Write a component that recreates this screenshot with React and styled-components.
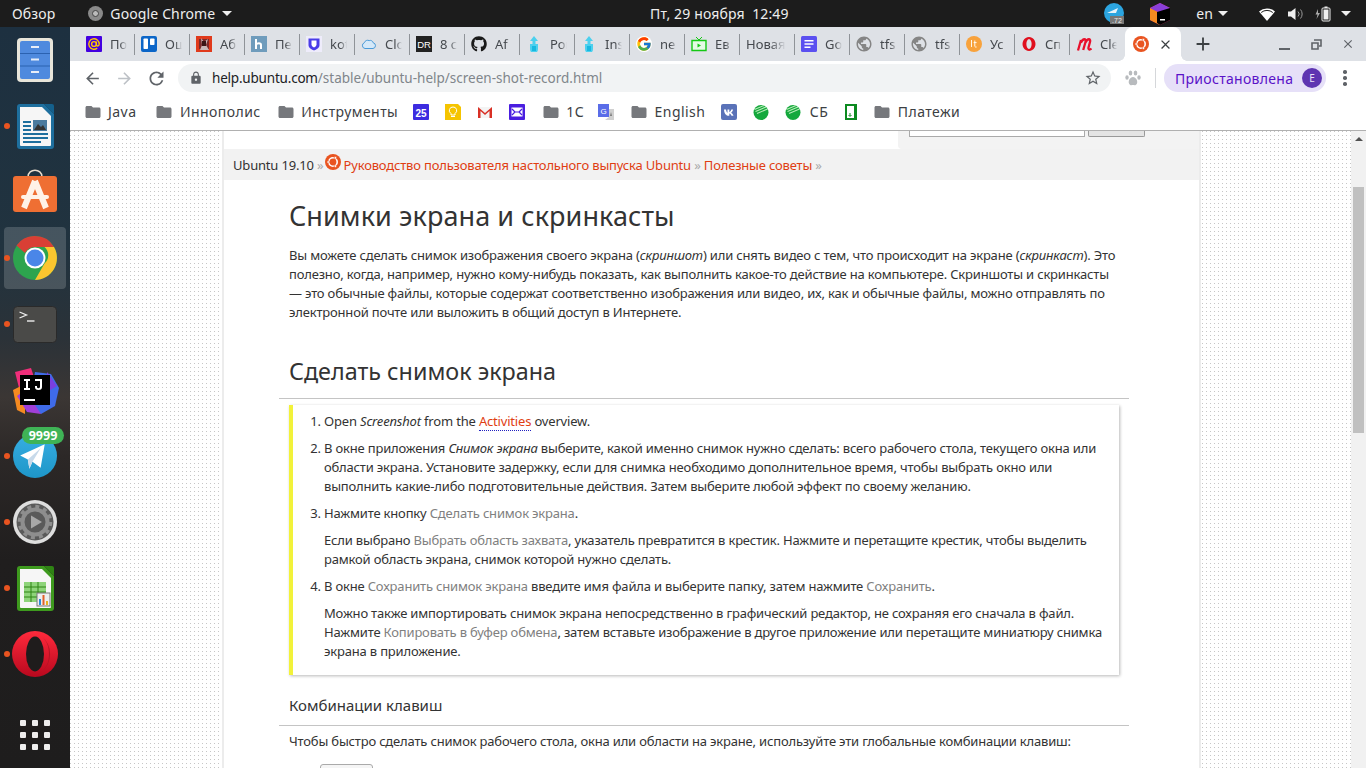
import styled, { createGlobalStyle } from 'styled-components';
import { FaGithub } from 'react-icons/fa';
import { FcGoogle } from 'react-icons/fc';
import { MdPublic, MdArrowBack, MdArrowForward, MdRefresh, MdLock, MdStarBorder, MdClose, MdAdd, MdFolder } from 'react-icons/md';

const uiFont = `"Noto Sans", "Open Sans", sans-serif`;

const GlobalStyle = createGlobalStyle`
    html, body { margin: 0; padding: 0; height: 100%; overflow: hidden; }
    body { font-family: ${uiFont}; background: #1d1d1d; }
    #root { height: 100%; }
`;

const Screen = styled.div`
    width: 1366px;
    height: 768px;
    display: flex;
    flex-direction: column;
    overflow: hidden;
`;

/* верхняя панель */
const TopBar = styled.header`
    height: 27px;
    flex: none;
    display: flex;
    align-items: center;
    background: #1c1c1c;
    color: #eee;
    font-size: 14px;
    letter-spacing: 0.13px;
`;

const TopLeft = styled.div`
    width: 650px;
    flex: none;
    display: flex;
    align-items: center;
    padding-left: 12px;
    box-sizing: border-box;
`;

const AppName = styled.div`
    margin-left: 33px;
    display: flex;
    align-items: center;
    gap: 7px;
`;

const Caret = styled.span`
    display: inline-block;
    width: 0;
    height: 0;
    border-left: 5px solid transparent;
    border-right: 5px solid transparent;
    border-top: 5px solid #eee;
    margin-left: ${(p) => p.$gap || 0}px;
`;

const Clock = styled.div`
    white-space: pre;
`;

const Tray = styled.div`
    margin-left: auto;
    display: flex;
    align-items: center;
    padding-right: 15px;
`;

const TrayItem = styled.div`
    display: flex;
    align-items: center;
    margin-left: ${(p) => p.$left}px;
`;

const Body = styled.div`
    flex: 1;
    min-height: 0;
    display: flex;
`;

/* док */
const Dock = styled.aside`
    width: 70px;
    flex: none;
    display: flex;
    flex-direction: column;
    background: linear-gradient(#1d3040 0, #21333f 30%, #2b3238 42%, #3b3634 50%, #2c2827 58%, #201e1e 72%, #1e1d1d 100%);
`;

const DockItem = styled.div`
    position: relative;
    height: 66px;
    flex: none;
    display: flex;
    align-items: center;
    justify-content: center;

    &::before {
        content: '';
        display: ${(p) => (p.$running ? 'block' : 'none')};
        position: absolute;
        left: 4px;
        top: 30px;
        width: 6px;
        height: 6px;
        border-radius: 50%;
        background: #e95420;
    }
`;

const DockActive = styled.div`
    width: 62px;
    height: 62px;
    border-radius: 4px;
    background: rgba(255, 255, 255, 0.17);
    display: flex;
    align-items: center;
    justify-content: center;
`;

const DockApps = styled(DockItem)`
    margin-top: auto;
`;

const AppsGrid = styled.div`
    display: grid;
    grid-template-columns: repeat(3, 6px);
    gap: 6px;

    span {
        height: 6px;
        border-radius: 1px;
        background: #eee;
    }
`;

const Badge = styled.div`
    position: absolute;
    left: 22px;
    top: 4px;
    width: 42px;
    height: 17px;
    border-radius: 9px;
    background: #3fb356;
    color: #fff;
    font-size: 12.5px;
    font-weight: 700;
    line-height: 17px;
    text-align: center;
`;

/* браузер */
const Browser = styled.main`
    flex: 1;
    min-width: 0;
    display: flex;
    flex-direction: column;
    background: #fff;
`;

const TabStrip = styled.div`
    height: 34px;
    flex: none;
    display: flex;
    align-items: stretch;
    padding-left: 10px;
    background: #dee1e6;
`;

const Tab = styled.div`
    position: relative;
    width: 55px;
    flex: none;
    box-sizing: border-box;
    display: flex;
    align-items: center;
    gap: 8px;
    padding-left: 6px;
    font-size: 13px;
    color: #45494e;

    &::after {
        content: '';
        position: absolute;
        right: 0;
        top: 7px;
        height: 21px;
        width: 1px;
        background: #8f9398;
        display: ${(p) => (p.$last ? 'none' : 'block')};
    }
`;

const TabLabel = styled.span`
    width: ${(p) => p.$width || 17}px;
    overflow: hidden;
    white-space: nowrap;
    -webkit-mask-image: linear-gradient(to right, #000 60%, transparent);
    mask-image: linear-gradient(to right, #000 60%, transparent);
`;

const ActiveTab = styled.div`
    position: relative;
    width: 56px;
    flex: none;
    box-sizing: border-box;
    display: flex;
    align-items: center;
    justify-content: space-between;
    padding: 0 8px;
    background: #fff;
    border-radius: 8px 8px 0 0;
    color: #45494e;

    &::before,
    &::after {
        content: '';
        position: absolute;
        bottom: 0;
        width: 6px;
        height: 6px;
    }

    &::before {
        left: -6px;
        background: radial-gradient(circle at 0 0, #dee1e6 5.5px, #fff 6px);
    }

    &::after {
        right: -6px;
        background: radial-gradient(circle at 100% 0, #dee1e6 5.5px, #fff 6px);
    }
`;

const NewTab = styled.div`
    margin-left: 11px;
    display: flex;
    align-items: center;
    color: #3c4043;
`;

const WindowButtons = styled.div`
    margin-left: auto;
    display: flex;
    align-items: center;
    gap: 18px;
    padding-right: 11px;
    color: #5f6368;
`;

const WinBtn = styled.div`
    width: 14px;
    height: 14px;
    display: flex;
    align-items: center;
    justify-content: center;
`;

const Toolbar = styled.div`
    height: 34px;
    flex: none;
    display: flex;
    align-items: center;
    padding-left: 6px;
    color: #5f6368;
`;

const NavBtn = styled.div`
    width: 32px;
    display: flex;
    justify-content: center;
    color: ${(p) => (p.$off ? '#bdc1c6' : '#5f6368')};
`;

const Omnibox = styled.div`
    width: 933px;
    height: 28px;
    margin-left: 6px;
    display: flex;
    align-items: center;
    padding: 0 9px 0 11px;
    box-sizing: border-box;
    border-radius: 14px;
    background: #f1f3f4;
    font-size: 13.5px;
`;

const Url = styled.div`
    margin-left: 9px;
    color: #80868b;
    white-space: nowrap;

    b {
        font-weight: 400;
        color: #202124;
        letter-spacing: -0.2px;
    }
`;

const Star = styled.div`
    margin-left: auto;
    display: flex;
`;

const ExtIcon = styled.div`
    margin-left: 14px;
    display: flex;
`;

const ToolbarDivider = styled.div`
    width: 1px;
    height: 20px;
    margin-left: 14px;
    background: #d5d7da;
`;

const ProfilePill = styled.div`
    width: 162px;
    height: 28px;
    margin-left: 8px;
    display: flex;
    align-items: center;
    justify-content: space-between;
    padding: 0 4px 0 11px;
    box-sizing: border-box;
    border-radius: 14px;
    background: #e6e0f8;
    color: #5a12c8;
    font-size: 14px;
    letter-spacing: 0.3px;
`;

const Avatar = styled.div`
    width: 20px;
    height: 20px;
    border-radius: 50%;
    background: #5e35b1;
    color: #e8e0f8;
    font-size: 10px;
    line-height: 20px;
    text-align: center;
    letter-spacing: 0;
`;

const MenuDots = styled.div`
    margin-left: 17px;
    display: flex;
    flex-direction: column;
    gap: 2.5px;

    span {
        width: 3.5px;
        height: 3.5px;
        border-radius: 50%;
        background: #5f6368;
    }
`;

const BookmarkBar = styled.div`
    height: 33px;
    padding: 0 0 2px 13.5px;
    flex: none;
    display: flex;
    align-items: center;
    border-bottom: 1px solid #b0b0b0;
    font-size: 14px;
    color: #3c4043;
    letter-spacing: 0.45px;
`;

const Bookmark = styled.div`
    display: flex;
    align-items: center;
    gap: ${(p) => p.$gap || 6.5}px;
    margin-right: ${(p) => p.$right}px;
    white-space: nowrap;
`;

/* страница */
const Viewport = styled.div`
    flex: 1;
    min-height: 0;
    display: flex;
`;

const Dotted = styled.div`
    flex: 1;
    min-width: 0;
    overflow: hidden;
    background: conic-gradient(from 270deg at 1px 1px, #c6c6c6 90deg, #fff 0) 0 0 / 4px 4px;
`;

const Page = styled.article`
    width: 975px;
    margin-left: 154px;
    background: #fff;
    box-shadow: -2px 0 0 #ececec, 2px 0 0 #ececec;
    color: #333;
    font-size: 13px;
    line-height: 19px;
    letter-spacing: -0.18px;
`;

const SearchStrip = styled.div`
    height: 18px;
    display: flex;
    justify-content: flex-end;
`;

const SearchPanel = styled.div`
    width: 301px;
    box-sizing: border-box;
    display: flex;
    gap: 3px;
    padding-left: 11px;
    background: #f3f3f3;
    border-radius: 0 0 0 4px;
`;

const SearchInput = styled.div`
    width: 174px;
    height: 5px;
    background: #fff;
    border: 1px solid #aaa;
    border-top: 0;
`;

const SearchButton = styled.div`
    width: 55px;
    height: 5px;
    background: #e4e4e4;
    border: 1px solid #999;
    border-top: 0;
    border-radius: 0 0 2px 2px;
`;

const Crumbs = styled.nav`
    height: 30px;
    padding: 1px 0 0 9px;
    display: flex;
    align-items: center;
    background: #f2f2f2;
    white-space: pre;
    color: #333;

    i {
        font-style: normal;
        color: #aaa;
    }

    a {
        color: #e03e12;
    }
`;

const CrumbLogo = styled.span`
    display: flex;
    margin: -6px 3px 0 -2px;
`;

const Content = styled.div`
    padding: 0 70px 0 55px;
`;

const Title = styled.h1`
    margin: 17px 0 0 10px;
    font-size: 27px;
    line-height: 38px;
    font-weight: 400;
    letter-spacing: 0.08px;
    color: #333;
    white-space: nowrap;
`;

const Para = styled.p`
    margin: ${(p) => p.$top}px 0 0 10px;
    white-space: nowrap;
`;

const Section = styled.h2`
    margin: 30px -70px 0 0;
    padding: 0 0 8px 10px;
    font-size: 23.35px;
    line-height: 38px;
    font-weight: 400;
    letter-spacing: 0;
    border-bottom: 1px solid #c4c4c4;
    width: 840px;
`;

const Steps = styled.div`
    margin: 6px 0 0 10px;
    width: 826px;
    height: 270px;
    border-left: 4px solid #f2f23a;
    box-shadow: 1px 1px 3px rgba(0, 0, 0, 0.28);
    overflow: hidden;
`;

const StepList = styled.ol`
    margin: 7px 0 0;
    padding: 0 0 0 31px;
    white-space: nowrap;

    p {
        margin: 8px 0 0;
    }
`;

const Step = styled.li`
    margin-top: ${(p) => (p.$first ? 0 : 8)}px;
`;

const GuiLabel = styled.span`
    color: #808080;
`;

const TermLink = styled.a`
    color: #e03e12;
    border-bottom: 1px dotted #2020c0;
`;

const SubSection = styled.h3`
    margin: 19px 0 0;
    padding: 0 0 9px 10px;
    font-size: 15px;
    line-height: 22px;
    font-weight: 400;
    letter-spacing: 0;
    width: 840px;
    border-bottom: 1px solid #c4c4c4;
`;

const KeyRow = styled.div`
    margin: 13px 0 0 41px;
    display: flex;
`;

const Key = styled.div`
    width: 51px;
    height: 20px;
    border: 1px solid #aaa;
    border-radius: 3px;
    background: #f5f5f5;
`;

const ScrollTrack = styled.div`
    width: 15px;
    flex: none;
    display: flex;
    flex-direction: column;
    align-items: center;
    background: #f1f1f1;
`;

const ScrollArrow = styled.div`
    margin-top: 6px;
    width: 0;
    height: 0;
    border-left: 4px solid transparent;
    border-right: 4px solid transparent;
    border-bottom: 4px solid #505050;
`;

const ScrollThumb = styled.div`
    margin-top: 46px;
    width: 11px;
    height: 246px;
    background: #c0c0c0;
`;

/* иконки */
const Ubuntu = ({ size = 16 }) => (
    <svg width={size} height={size} viewBox="0 0 16 16">
        <circle cx="8" cy="8" r="8" fill="#e95420" />
        <circle cx="8" cy="8" r="4.2" fill="none" stroke="#fff" strokeWidth="1.6" />
        <circle cx="3.2" cy="8" r="1.3" fill="#fff" stroke="#e95420" strokeWidth=".6" />
        <circle cx="10.4" cy="3.9" r="1.3" fill="#fff" stroke="#e95420" strokeWidth=".6" />
        <circle cx="10.4" cy="12.1" r="1.3" fill="#fff" stroke="#e95420" strokeWidth=".6" />
    </svg>
);

const Fav = ({ children, w = 16 }) => (
    <svg width={w} height="16" viewBox={`0 0 ${w} 16`} style={{ flex: 'none' }}>{children}</svg>
);

const favicons = {
    mail: <Fav><rect width="16" height="16" rx="1" fill="#4300e0" /><circle cx="8" cy="8" r="2.4" fill="none" stroke="#ffc800" strokeWidth="1.4" /><path d="M10.4 5.6v3.2c0 1.8 2.8 1.6 2.8-.8a5.2 5.2 0 1 0-2 4.1" fill="none" stroke="#ffc800" strokeWidth="1.4" /></Fav>,
    trello: <Fav><rect width="16" height="16" rx="2" fill="#0c66c8" /><rect x="2.5" y="2.5" width="4.5" height="10.5" rx=".8" fill="#fff" /><rect x="9" y="2.5" width="4.5" height="6.5" rx=".8" fill="#fff" /></Fav>,
    photo: <Fav><rect width="16" height="16" fill="#e03a1c" /><path d="M3 3h10v10H3z" fill="#7d2a2a" /><path d="M5 2l3 4 4-3-2 6 3 5H4l2-5z" fill="#c9b8b8" /><path d="M6 5h4v5H6z" fill="#3a1515" /></Fav>,
    hexlet: <Fav><rect width="16" height="16" fill="#6f9cbc" /><path d="M5 3v10M5 8.5c1-1.5 5-2 5 .5V13" fill="none" stroke="#fff" strokeWidth="2" /></Fav>,
    shield: <Fav><rect width="16" height="16" fill="#eeecfb" /><path d="M2.5 2.5h11v6.5c0 3-3 4.5-5.500 5.500C5.500 13.500 2.500 12 2.500 9z" fill="#4a3ce8" /><path d="M5.500 4.500h5v4c0 1.500-1.500 2.500-2.500 3-1-.5-2.500-1.500-2.500-3z" fill="#fff" /></Fav>,
    cloud: <Fav><path d="M4 12.5a3 3 0 0 1-.6-5.800 3.400 3.400 0 0 1 4.800-2.100 3 3 0 0 1 4 2.200 2.900 2.900 0 0 1-.2 5.700z" fill="#d4e8f8" stroke="#4a9ad8" /></Fav>,
    dr: <Fav><rect width="16" height="16" fill="#222" /><text x="8" y="12" textAnchor="middle" fontSize="9.5" fontFamily="Liberation Sans" fill="#fff">DR</text></Fav>,
    github: <FaGithub size={16} color="#1a1a1a" style={{ flex: 'none' }} />,
    tower: <Fav><path d="M8 0l4 5H9.500v3H12v5a3 3 0 0 1-8 0V8h2.500V5H4z" fill="#4cd0ee" /><path d="M6 10h4v5H6z" fill="#18b8e0" /></Fav>,
    tv: <Fav><path d="M1 4.500h14v10H1z" fill="#e4fbe4" stroke="#14c814" strokeWidth="1.400" /><path d="M5 1l3 3 3-3" fill="none" stroke="#14c814" /><path d="M6.500 7.500v4l3.500-2z" fill="#14c814" /></Fav>,
    docs: <Fav><rect width="16" height="16" rx="1.500" fill="#5b50f0" /><path d="M3.500 4h9v1.600h-9zM3.500 7.200h9v1.600h-9zM3.500 10.400h6v1.600h-6z" fill="#fff" /></Fav>,
    globe: <MdPublic size={18} color="#858585" style={{ flex: 'none', margin: '-1px' }} />,
    lt: <Fav><circle cx="8" cy="8" r="8" fill="#f8a23c" /><path d="M5.500 4v7M8.800 4.500v5.500c0 1 .7 1.200 1.800 1M7.600 6.600h3" fill="none" stroke="#fff" strokeWidth=".9" /></Fav>,
    opera: <Fav><path fillRule="evenodd" d="M8 1a6.500 7 0 1 0 .01 0zM8 3a2.600 5 0 1 1-.01 0z" fill="#e0101e" /></Fav>,
    mem: <Fav><path d="M2 14.500L5 4M5 6.500C7 2 10.500 2.500 9.500 6L7.200 14M9.500 6.500C11.500 2 15 2.500 14 6L12.500 11.500C12 14 14 14 15.500 12.500" fill="none" stroke="#e8102c" strokeWidth="2.300" /></Fav>
};

const tabs = [
    ['mail', 'Почта'], ['trello', 'Ошибки'], ['photo', 'Абв'], ['hexlet', 'Первый'], ['shield', 'kotlin'],
    ['cloud', 'Cloud'], ['dr', '8 сент'], ['github', 'Af'], ['tower', 'Ром'], ['tower', 'Ins'],
    ['google', 'ne'], ['tv', 'Ев'], [null, 'Новая'], ['docs', 'Go'], ['globe', 'tfs'],
    ['globe', 'tfs'], ['lt', 'Ус'], ['opera', 'Сп'], ['mem', 'Cle']
];

const Folder = () => <MdFolder size={18} color="#76787c" style={{ flex: 'none' }} />;

const BmGap = styled.div`
    width: ${(p) => p.$w}px;
    flex: none;
`;

const SberIcon = () => (
    <Fav>
        <circle cx="8" cy="8.500" r="7.500" fill="#14a83c" />
        <path d="M1.500 5.500L11 1.500M2.500 7.500L13 3M4 9.500L14.500 5" stroke="#b8ecb8" strokeWidth="1.100" />
    </Fav>
);

const FilesIcon = () => (
    <svg width="36" height="44" viewBox="0 0 36 44">
        <rect width="36" height="44" rx="4" fill="#e8e5da" />
        <rect x="3" y="3" width="30" height="38" rx="2" fill="#4f8ade" />
        <path d="M3 15.500h30M3 28h30" stroke="#2b62b0" strokeWidth="1" />
        <path d="M14 9h8M14 21.500h8M14 34h8" stroke="#e8eef8" strokeWidth="2" />
    </svg>
);

const DocIcon = ({ frame, fold, children }) => (
    <svg width="37" height="45" viewBox="0 0 37 45">
        <path d="M3 0h24l10 10v32a3 3 0 0 1-3 3H3a3 3 0 0 1-3-3V3a3 3 0 0 1 3-3z" fill={frame} />
        <path d="M3 3h22l9 9v29a1 1 0 0 1-1 1H4a1 1 0 0 1-1-1z" fill="#f6f6f6" />
        <path d="M27 0h8a2 2 0 0 1 2 2v8z" fill={fold} />
        {children}
    </svg>
);

const StoreIcon = () => (
    <svg width="44" height="43" viewBox="0 0 44 43" style={{ marginTop: -3 }}>
        <path d="M15 8c0-9 14-9 14 0" fill="none" stroke="#eadccc" strokeWidth="1.500" />
        <path d="M3 7h38a3 3 0 0 1 3 3v30a3 3 0 0 1-3 3H3a3 3 0 0 1-3-3V10a3 3 0 0 1 3-3z" fill="#ef6f33" />
        <path d="M22 12L11 39M22 12l11 27" stroke="#fff3e8" strokeWidth="6" fill="none" />
        <rect x="8" y="26" width="28" height="4" rx="2" fill="#fff3e8" />
    </svg>
);

const ChromeIcon = () => (
    <svg width="44" height="44" viewBox="0 0 44 44">
        <circle cx="22" cy="22" r="22" fill="#2da44e" />
        <path d="M22 0a22 22 0 0 1 19 11H22a11 11 0 0 0-10 6L3.500 9.500A22 22 0 0 1 22 0z" fill="#d93f35" />
        <path d="M41 11a22 22 0 0 1-19 33l9.500-16.500a11 11 0 0 0 0-16.500z" fill="#fbc62f" />
        <circle cx="22" cy="22" r="10.500" fill="#fff" />
        <circle cx="22" cy="22" r="8.500" fill="#4a86e8" />
    </svg>
);

const TerminalIcon = () => (
    <svg width="44" height="37" viewBox="0 0 44 37">
        <rect x=".5" y=".5" width="43" height="36" rx="4" fill="#4a4a48" stroke="#2a2a2a" />
        <path d="M6.500 6l7 3-7 3" fill="none" stroke="#eee" strokeWidth="1.300" />
        <path d="M14 15h7.500" stroke="#eee" strokeWidth="1.400" />
    </svg>
);

const IdeaIcon = () => (
    <svg width="48" height="48" viewBox="0 0 48 48">
        <path d="M4 6l16-4 4 12L8 22z" fill="#f02e7a" />
        <path d="M24 6l16 2 8 14-4 18-14 8-12-12z" fill="#3f6be8" />
        <path d="M36 6l10 14-10 6z" fill="#7a3fe0" />
        <path d="M2 24l12-6v30L6 44z" fill="#f58a20" />
        <path d="M6 30l10 16 14 2-16-24z" fill="#a03fd8" />
        <rect x="9" y="9" width="30" height="30" fill="#000" />
        <path d="M13 13h6v2h-2v7h2v2h-6v-2h2v-7h-2zM24 13h7v8c0 2-1 3-3.500 3S24 23 24 21v-1h2v1c0 .8.700 1.200 1.500 1.200s1.500-.4 1.500-1.200v-6h-5z" fill="#fff" />
        <rect x="13" y="33" width="11" height="2" fill="#fff" />
    </svg>
);

const TelegramIcon = () => (
    <svg width="44" height="44" viewBox="0 0 43 43">
        <defs>
            <linearGradient id="tg" x1="0" y1="0" x2="0" y2="1">
                <stop offset="0" stopColor="#37aee2" />
                <stop offset="1" stopColor="#1e96c8" />
            </linearGradient>
        </defs>
        <circle cx="21.500" cy="21.500" r="21.500" fill="url(#tg)" />
        <path d="M7 21L31 10 27 33 19 27 16 34 14.500 25z" fill="#fff" />
        <path d="M14.500 25L27 14 19 27 16 34z" fill="#c8daea" />
    </svg>
);

const SettingsIcon = () => (
    <svg width="44" height="44" viewBox="0 0 44 44">
        <circle cx="22" cy="22" r="22" fill="#dedede" />
        <circle cx="22" cy="22" r="18.500" fill="#5a5a5a" />
        <circle cx="22" cy="22" r="12.500" fill="none" stroke="#8e8e8e" strokeWidth="4" />
        <circle cx="22" cy="22" r="15.500" fill="none" stroke="#8e8e8e" strokeWidth="3.500" strokeDasharray="4 4.100" />
        <path d="M18 15.500v13l11-6.500z" fill="#a8a8a8" />
    </svg>
);

const OperaIcon = () => (
    <svg width="46" height="46" viewBox="0 0 46 46">
        <defs>
            <linearGradient id="op" x1="0" y1="0" x2="0" y2="1">
                <stop offset="0" stopColor="#ff2a3c" />
                <stop offset="1" stopColor="#b8081e" />
            </linearGradient>
        </defs>
        <circle cx="23" cy="23" r="23" fill="url(#op)" />
        <ellipse cx="23" cy="23" rx="9" ry="17.500" fill="#1f1c1c" />
        <path d="M30 5.500A23 23 0 0 1 30 40.500C35 36 37 30 37 23S35 10 30 5.500z" fill="#b01424" />
    </svg>
);

const WifiIcon = () => (
    <svg width="16" height="14" viewBox="0 0 16 14">
        <path d="M0 4.500a12 12 0 0 1 16 0L8 14z" fill="#fff" />
        <path d="M2.200 5.500a9 9 0 0 1 11.600 0" stroke="#1c1c1c" strokeWidth="1" fill="none" />
    </svg>
);

const VolumeIcon = () => (
    <svg width="16" height="14" viewBox="0 0 16 14">
        <path d="M0 4.500h3L7.500 1v12L3 9.500H0z" fill="#eee" />
        <path d="M10 4.500a3.500 3.500 0 0 1 0 5M12.500 2.500a7 7 0 0 1 0 9" stroke="#999" fill="none" />
    </svg>
);

const BatteryIcon = () => (
    <svg width="16" height="16" viewBox="0 0 16 16">
        <path d="M3 3L.5 8.500h2L1.500 13 5 7H3z" fill="#aaa" />
        <rect x="7" y="2" width="8" height="13" rx="1" fill="none" stroke="#eee" />
        <rect x="8.500" y="3.500" width="5" height="10" fill="#eee" />
        <rect x="9.500" y="0.500" width="3" height="1.500" fill="#eee" />
    </svg>
);

const TelegramTray = () => (
    <svg width="20" height="22" viewBox="0 0 20 22">
        <circle cx="10" cy="10" r="10" fill="#2ca5e0" />
        <path d="M3 10l11-5-2 5z" fill="#e8f4fa" />
        <rect x="6" y="13" width="14" height="8" fill="#777" />
        <text x="13" y="20" fontSize="7" textAnchor="middle" fontFamily="Liberation Sans" fill="#eee">.72</text>
    </svg>
);

const ToolboxTray = () => (
    <svg width="20" height="22" viewBox="0 0 20 22">
        <path d="M10 0l10 5v12l-10 5-10-5V5z" fill="#e6326e" />
        <path d="M0 5l10 5v12L0 17z" fill="#f58a20" />
        <path d="M10 0l10 5-10 5-10-5z" fill="#8a3fd8" />
        <path d="M7 9l13-4v12l-10 5-3-2z" fill="#000" />
        <rect x="10" y="16" width="5" height="1.500" fill="#fff" />
    </svg>
);

const Paw = () => (
    <svg width="16" height="16" viewBox="0 0 16 16" fill="#b8bbbe">
        <ellipse cx="2" cy="7.500" rx="1.700" ry="2.200" />
        <ellipse cx="5.500" cy="3" rx="1.800" ry="2.500" />
        <ellipse cx="10.500" cy="3" rx="1.800" ry="2.500" />
        <ellipse cx="14" cy="7.500" rx="1.700" ry="2.200" />
        <path d="M8 7c3 0 5 4 4 6.500S9 15 8 15s-3 1-4-1.500S5 7 8 7z" />
    </svg>
);

export default function App() {
    return (
        <Screen>
            <GlobalStyle />
            <TopBar>
                <TopLeft>
                    <span>Обзор</span>
                    <AppName>
                        <svg width="15" height="15" viewBox="0 0 15 15">
                            <circle cx="7.500" cy="7.500" r="7.500" fill="#8a8a8a" />
                            <circle cx="7.500" cy="7.500" r="3" fill="#bbb" stroke="#444" />
                        </svg>
                        <span>Google Chrome</span>
                        <Caret />
                    </AppName>
                </TopLeft>
                <Clock>Пт, 29 ноября  12:49</Clock>
                <Tray>
                    <TrayItem $left={0}><TelegramTray /></TrayItem>
                    <TrayItem $left={26}><ToolboxTray /></TrayItem>
                    <TrayItem $left={26}>en<Caret $gap={5} /></TrayItem>
                    <TrayItem $left={31}><WifiIcon /></TrayItem>
                    <TrayItem $left={13}><VolumeIcon /></TrayItem>
                    <TrayItem $left={11}><BatteryIcon /></TrayItem>
                    <TrayItem $left={10}><Caret /></TrayItem>
                </Tray>
            </TopBar>
            <Body>
                <Dock>
                    <DockItem><FilesIcon /></DockItem>
                    <DockItem $running>
                        <DocIcon frame="#1e6f9e" fold="#14608c">
                            <rect x="6" y="17" width="8" height="2" fill="#1e6f9e" />
                            <rect x="6" y="21" width="8" height="2" fill="#1e6f9e" />
                            <rect x="6" y="25" width="8" height="2" fill="#1e6f9e" />
                            <rect x="16" y="16" width="14" height="11" fill="#4a7a9e" />
                            <path d="M17 26l4-6 3 3 2-2 3 5z" fill="#333" />
                            <rect x="6" y="29" width="25" height="2" fill="#1e6f9e" />
                            <rect x="6" y="33" width="25" height="2" fill="#1e6f9e" />
                            <rect x="6" y="37" width="18" height="2" fill="#1e6f9e" />
                        </DocIcon>
                    </DockItem>
                    <DockItem><StoreIcon /></DockItem>
                    <DockItem $running><DockActive><ChromeIcon /></DockActive></DockItem>
                    <DockItem $running><TerminalIcon /></DockItem>
                    <DockItem><IdeaIcon /></DockItem>
                    <DockItem $running>
                        <TelegramIcon />
                        <Badge>9999</Badge>
                    </DockItem>
                    <DockItem $running><SettingsIcon /></DockItem>
                    <DockItem $running>
                        <DocIcon frame="#3e9a1e" fold="#2f8414">
                            <rect x="7" y="16" width="22" height="20" fill="#8ed47a" />
                            <path d="M7 21h22M7 26h22M7 31h22M14 16v20M21 16v20" stroke="#2f8414" strokeWidth="1" />
                            <rect x="20" y="27" width="13" height="13" fill="#eee" stroke="#777" />
                            <path d="M22 33h2v6h-2z" fill="#2a8ad8" />
                            <path d="M25.500 29h2v10h-2z" fill="#e0602a" />
                            <path d="M29 35h2v4h-2z" fill="#e8b020" />
                        </DocIcon>
                    </DockItem>
                    <DockItem $running><OperaIcon /></DockItem>
                    <DockApps>
                        <AppsGrid>
                            {Array.from({ length: 9 }, (_, i) => <span key={i} />)}
                        </AppsGrid>
                    </DockApps>
                </Dock>
                <Browser>
                    <TabStrip>
                        {tabs.map(([icon, label], i) => (
                            <Tab key={i} $last={i === tabs.length - 1}>
                                {icon === 'google' ? (
                                    <FcGoogle size={16} style={{ flex: 'none', background: '#fff', borderRadius: '50%' }} />
                                ) : favicons[icon]}
                                <TabLabel $width={icon ? 17 : 40}>{label}</TabLabel>
                            </Tab>
                        ))}
                        <ActiveTab>
                            <Ubuntu />
                            <MdClose size={15} color="#3c4043" />
                        </ActiveTab>
                        <NewTab><MdAdd size={22} /></NewTab>
                        <WindowButtons>
                            <WinBtn>
                                <svg width="11" height="11" viewBox="0 0 11 11"><rect y="9" width="11" height="2" fill="#5f6368" /></svg>
                            </WinBtn>
                            <WinBtn>
                                <svg width="11" height="11" viewBox="0 0 11 11"><path d="M3 1h7v6H8M1 4h6v6H1z" fill="none" stroke="#5f6368" strokeWidth="1.600" /></svg>
                            </WinBtn>
                            <WinBtn><MdClose size={16} /></WinBtn>
                        </WindowButtons>
                    </TabStrip>
                    <Toolbar>
                        <NavBtn><MdArrowBack size={19} /></NavBtn>
                        <NavBtn $off><MdArrowForward size={19} /></NavBtn>
                        <NavBtn><MdRefresh size={21} /></NavBtn>
                        <Omnibox>
                            <MdLock size={14} />
                            <Url><b>help.ubuntu.com</b>/stable/ubuntu-help/screen-shot-record.html</Url>
                            <Star><MdStarBorder size={18} /></Star>
                        </Omnibox>
                        <ExtIcon><Paw /></ExtIcon>
                        <ToolbarDivider />
                        <ProfilePill>
                            Приостановлена
                            <Avatar>Е</Avatar>
                        </ProfilePill>
                        <MenuDots><span /><span /><span /></MenuDots>
                    </Toolbar>
                    <BookmarkBar>
                        <Bookmark $right={19}><Folder />Java</Bookmark>
                        <Bookmark $right={16}><Folder />Иннополис</Bookmark>
                        <Bookmark $right={15}><Folder />Инструменты</Bookmark>
                        <Fav><rect width="16" height="16" rx="1" fill="#3d2ce0" /><text x="8" y="13" textAnchor="middle" fontSize="10" fontWeight="700" letterSpacing="0" fontFamily="Liberation Sans" fill="#fff">25</text></Fav>
                        <BmGap $w={16} />
                        <Fav><path d="M0 0h13l3 3v13H0z" fill="#f5c400" /><path d="M8 3a3.500 3.500 0 0 0-2 6.500V11h4V9.500A3.500 3.500 0 0 0 8 3zM6 12.500h4" fill="none" stroke="#fff" /></Fav>
                        <BmGap $w={16} />
                        <Fav><path d="M1 3h14v11H1z" fill="#f4f4f4" /><path d="M1 14V3l7 6 7-6v11h-2.500V7L8 11 3.500 7v7z" fill="#d93025" /></Fav>
                        <BmGap $w={16} />
                        <Fav><rect width="16" height="16" rx="1" fill="#4a1ee0" /><rect x="2.500" y="3.500" width="11" height="9" fill="#fff" /><path d="M3 5l3 3-3 3M13 5l-3 3 3 3M6 8h4" fill="none" stroke="#4a1ee0" strokeWidth="1.200" /></Fav>
                        <BmGap $w={16.5} />
                        <Bookmark $right={13.5}><Folder />1С</Bookmark>
                        <Fav><rect width="11" height="13" fill="#5a6de8" /><text x="5.500" y="10" textAnchor="middle" fontSize="8" letterSpacing="0" fontFamily="Liberation Sans" fill="#fff">G</text><path d="M11 5h5v11H7l4-3z" fill="#d0d0d0" /><path d="M13 8l1 4h-2z" fill="#777" /></Fav>
                        <BmGap $w={16.5} />
                        <Bookmark $right={15.5}><Folder />English</Bookmark>
                        <Fav><rect width="16" height="16" rx="2" fill="#5a72b8" /><path d="M3 5.500h2c.2 2 1 3 1.500 3.200V5.500h1.800v2.700c.8-.2 1.600-1.500 2-2.700h1.800c-.3 1.500-1.200 2.700-2 3.300.8.400 1.900 1.500 2.400 3h-2c-.4-1-1.200-2-2.200-2.200v2.200H8C5 11.800 3.200 9.500 3 5.500z" fill="#fff" /></Fav>
                        <BmGap $w={16} />
                        <SberIcon />
                        <BmGap $w={16} />
                        <Bookmark $right={16.5} $gap={9}><SberIcon />СБ</Bookmark>
                        <Fav w={12}><path d="M0 0h12v16H0z" fill="#0c8a20" /><path d="M2 2h7v12H2z" fill="#fff" /><path d="M5 9v3M3.500 11l1.500 1.500L6.500 11" stroke="#0c8a20" fill="none" /></Fav>
                        <BmGap $w={16.5} />
                        <Bookmark $right={0}><Folder />Платежи</Bookmark>
                    </BookmarkBar>
                    <Viewport>
                        <Dotted>
                            <Page>
                                <SearchStrip>
                                    <SearchPanel>
                                        <SearchInput />
                                        <SearchButton />
                                    </SearchPanel>
                                </SearchStrip>
                                <Crumbs>
                                    Ubuntu 19.10 <i>» </i><CrumbLogo><Ubuntu /></CrumbLogo><a>Руководство пользователя настольного выпуска Ubuntu</a><i> » </i><a>Полезные советы</a><i> »</i>
                                </Crumbs>
                                <Content>
                                    <Title>Снимки экрана и скринкасты</Title>
                                    <Para $top={11}>
                                        Вы можете сделать снимок изображения своего экрана (<em>скриншот</em>) или снять видео с тем, что происходит на экране (<em>скринкаст</em>). Это<br />
                                        полезно, когда, например, нужно кому-нибудь показать, как выполнить какое-то действие на компьютере. Скриншоты и скринкасты<br />
                                        — это обычные файлы, которые содержат соответственно изображения или видео, их, как и обычные файлы, можно отправлять по<br />
                                        электронной почте или выложить в общий доступ в Интернете.
                                    </Para>
                                    <Section>Сделать снимок экрана</Section>
                                    <Steps>
                                        <StepList>
                                            <Step $first>Open <em>Screenshot</em> from the <TermLink>Activities</TermLink> overview.</Step>
                                            <Step>
                                                В окне приложения <em>Снимок экрана</em> выберите, какой именно снимок нужно сделать: всего рабочего стола, текущего окна или<br />
                                                области экрана. Установите задержку, если для снимка необходимо дополнительное время, чтобы выбрать окно или<br />
                                                выполнить какие-либо подготовительные действия. Затем выберите любой эффект по своему желанию.
                                            </Step>
                                            <Step>
                                                Нажмите кнопку <GuiLabel>Сделать снимок экрана</GuiLabel>.
                                                <p>
                                                    Если выбрано <GuiLabel>Выбрать область захвата</GuiLabel>, указатель превратится в крестик. Нажмите и перетащите крестик, чтобы выделить<br />
                                                    рамкой область экрана, снимок которой нужно сделать.
                                                </p>
                                            </Step>
                                            <Step>
                                                В окне <GuiLabel>Сохранить снимок экрана</GuiLabel> введите имя файла и выберите папку, затем нажмите <GuiLabel>Сохранить</GuiLabel>.
                                                <p>
                                                    Можно также импортировать снимок экрана непосредственно в графический редактор, не сохраняя его сначала в файл.<br />
                                                    Нажмите <GuiLabel>Копировать в буфер обмена</GuiLabel>, затем вставьте изображение в другое приложение или перетащите миниатюру снимка<br />
                                                    экрана в приложение.
                                                </p>
                                            </Step>
                                        </StepList>
                                    </Steps>
                                    <SubSection>Комбинации клавиш</SubSection>
                                    <Para $top={6}>Чтобы быстро сделать снимок рабочего стола, окна или области на экране, используйте эти глобальные комбинации клавиш:</Para>
                                    <KeyRow><Key /></KeyRow>
                                </Content>
                            </Page>
                        </Dotted>
                        <ScrollTrack>
                            <ScrollArrow />
                            <ScrollThumb />
                        </ScrollTrack>
                    </Viewport>
                </Browser>
            </Body>
        </Screen>
    );
}
